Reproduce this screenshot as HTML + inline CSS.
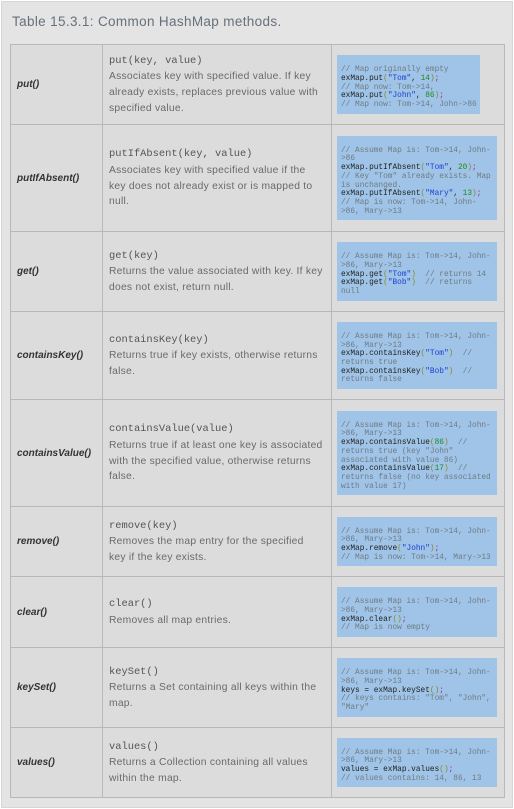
<!DOCTYPE html>
<html><head><meta charset="utf-8"><style>
*{margin:0;padding:0;box-sizing:border-box}
body{width:514px;height:809px;background:#fff;font-family:"Liberation Sans",Arial,sans-serif;position:relative;overflow:hidden}
.outer{position:absolute;left:1px;top:1px;width:512px;height:807px;background:#e4e4e4;border:1px solid #d6d6d6}
.title{position:absolute;left:12px;top:14px;font-size:13.5px;color:#66707a;letter-spacing:0.35px}
.row{position:absolute;left:10px;width:495px;border:1px solid #b8b8b8;background:#dcdcdc}
.c1,.c2,.c3{position:absolute;top:0;bottom:0;display:flex;align-items:center}
.c1{left:0;width:92px;padding-left:6px;font-weight:bold;font-style:italic;font-size:10px;color:#333;border-right:1px solid #b8b8b8}
.c2{left:92px;width:229px;padding-left:6px;padding-right:8px;border-right:1px solid #b8b8b8;font-size:10.3px;line-height:15.6px;color:#6a6a6a;letter-spacing:0.25px}
.c2 code{font-family:"Liberation Mono",monospace;font-size:10.4px;color:#555;letter-spacing:0}
.c3{left:321px;right:0;padding-left:5px}
.code{background:#9fc4e7;font-family:"Liberation Mono",monospace;font-size:7.8px;line-height:8.7px;color:#222;padding:11px 4px 4px 4px;white-space:pre;width:160px}
.cm{color:#707a84}.s{color:#1a3fcf}.n{color:#1e8a1e}.p{color:#8a8a20}.pu{color:#a020a0}
</style></head><body>
<div class="outer"></div>
<div class="title">Table 15.3.1: Common HashMap methods.</div>

<div class="row" style="top:44px;height:81px">
<div class="c1">put()</div>
<div class="c2"><div><code>put(key, value)</code><br>Associates key with specified value. If key already exists, replaces previous value with specified value.</div></div>
<div class="c3"><div class="code" style="width:143px"><span class="cm">// Map originally empty</span>
exMap.put<span class="p">(</span><span class="s">"Tom"</span>, <span class="n">14</span><span class="p">)</span><span class="pu">;</span>
<span class="cm">// Map now: Tom-&gt;14,</span>
exMap.put<span class="p">(</span><span class="s">"John"</span>, <span class="n">86</span><span class="p">)</span><span class="pu">;</span>
<span class="cm">// Map now: Tom-&gt;14, John-&gt;86</span></div></div>
</div>

<div class="row" style="top:124px;height:108px">
<div class="c1">putIfAbsent()</div>
<div class="c2"><div><code>putIfAbsent(key, value)</code><br>Associates key with specified value if the key does not already exist or is mapped to null.</div></div>
<div class="c3"><div class="code"><span class="cm">// Assume Map is: Tom-&gt;14, John-
&gt;86</span>
exMap.putIfAbsent<span class="p">(</span><span class="s">"Tom"</span>, <span class="n">20</span><span class="p">)</span><span class="pu">;</span>
<span class="cm">// Key "Tom" already exists. Map
is unchanged.</span>
exMap.putIfAbsent<span class="p">(</span><span class="s">"Mary"</span>, <span class="n">13</span><span class="p">)</span><span class="pu">;</span>
<span class="cm">// Map is now: Tom-&gt;14, John-
&gt;86, Mary-&gt;13</span></div></div>
</div>

<div class="row" style="top:231px;height:81px">
<div class="c1">get()</div>
<div class="c2"><div><code>get(key)</code><br>Returns the value associated with key. If key does not exist, return null.</div></div>
<div class="c3"><div class="code"><span class="cm">// Assume Map is: Tom-&gt;14, John-
&gt;86, Mary-&gt;13</span>
exMap.get<span class="p">(</span><span class="s">"Tom"</span><span class="p">)</span>  <span class="cm">// returns 14</span>
exMap.get<span class="p">(</span><span class="s">"Bob"</span><span class="p">)</span>  <span class="cm">// returns
null</span></div></div>
</div>

<div class="row" style="top:311px;height:89px">
<div class="c1">containsKey()</div>
<div class="c2"><div><code>containsKey(key)</code><br>Returns true if key exists, otherwise returns false.</div></div>
<div class="c3"><div class="code"><span class="cm">// Assume Map is: Tom-&gt;14, John-
&gt;86, Mary-&gt;13</span>
exMap.containsKey<span class="p">(</span><span class="s">"Tom"</span><span class="p">)</span>  <span class="cm">//
returns true</span>
exMap.containsKey<span class="p">(</span><span class="s">"Bob"</span><span class="p">)</span>  <span class="cm">//
returns false</span></div></div>
</div>

<div class="row" style="top:399px;height:108px">
<div class="c1">containsValue()</div>
<div class="c2"><div><code>containsValue(value)</code><br>Returns true if at least one key is associated with the specified value, otherwise returns false.</div></div>
<div class="c3"><div class="code"><span class="cm">// Assume Map is: Tom-&gt;14, John-
&gt;86, Mary-&gt;13</span>
exMap.containsValue<span class="p">(</span><span class="n">86</span><span class="p">)</span>  <span class="cm">//
returns true (key "John"
associated with value 86)</span>
exMap.containsValue<span class="p">(</span><span class="n">17</span><span class="p">)</span>  <span class="cm">//
returns false (no key associated
with value 17)</span></div></div>
</div>

<div class="row" style="top:506px;height:71px">
<div class="c1">remove()</div>
<div class="c2"><div><code>remove(key)</code><br>Removes the map entry for the specified key if the key exists.</div></div>
<div class="c3"><div class="code"><span class="cm">// Assume Map is: Tom-&gt;14, John-
&gt;86, Mary-&gt;13</span>
exMap.remove<span class="p">(</span><span class="s">"John"</span><span class="p">)</span><span class="pu">;</span>
<span class="cm">// Map is now: Tom-&gt;14, Mary-&gt;13</span></div></div>
</div>

<div class="row" style="top:576px;height:72px">
<div class="c1">clear()</div>
<div class="c2"><div><code>clear()</code><br>Removes all map entries.</div></div>
<div class="c3"><div class="code"><span class="cm">// Assume Map is: Tom-&gt;14, John-
&gt;86, Mary-&gt;13</span>
exMap.clear<span class="p">()</span><span class="pu">;</span>
<span class="cm">// Map is now empty</span></div></div>
</div>

<div class="row" style="top:647px;height:81px">
<div class="c1">keySet()</div>
<div class="c2"><div><code>keySet()</code><br>Returns a Set containing all keys within the map.</div></div>
<div class="c3"><div class="code"><span class="cm">// Assume Map is: Tom-&gt;14, John-
&gt;86, Mary-&gt;13</span>
keys = exMap.keySet<span class="p">()</span><span class="pu">;</span>
<span class="cm">// keys contains: "Tom", "John",
"Mary"</span></div></div>
</div>

<div class="row" style="top:727px;height:71px">
<div class="c1">values()</div>
<div class="c2"><div><code>values()</code><br>Returns a Collection containing all values within the map.</div></div>
<div class="c3"><div class="code"><span class="cm">// Assume Map is: Tom-&gt;14, John-
&gt;86, Mary-&gt;13</span>
values = exMap.values<span class="p">()</span><span class="pu">;</span>
<span class="cm">// values contains: 14, 86, 13</span></div></div>
</div>
</body></html>
